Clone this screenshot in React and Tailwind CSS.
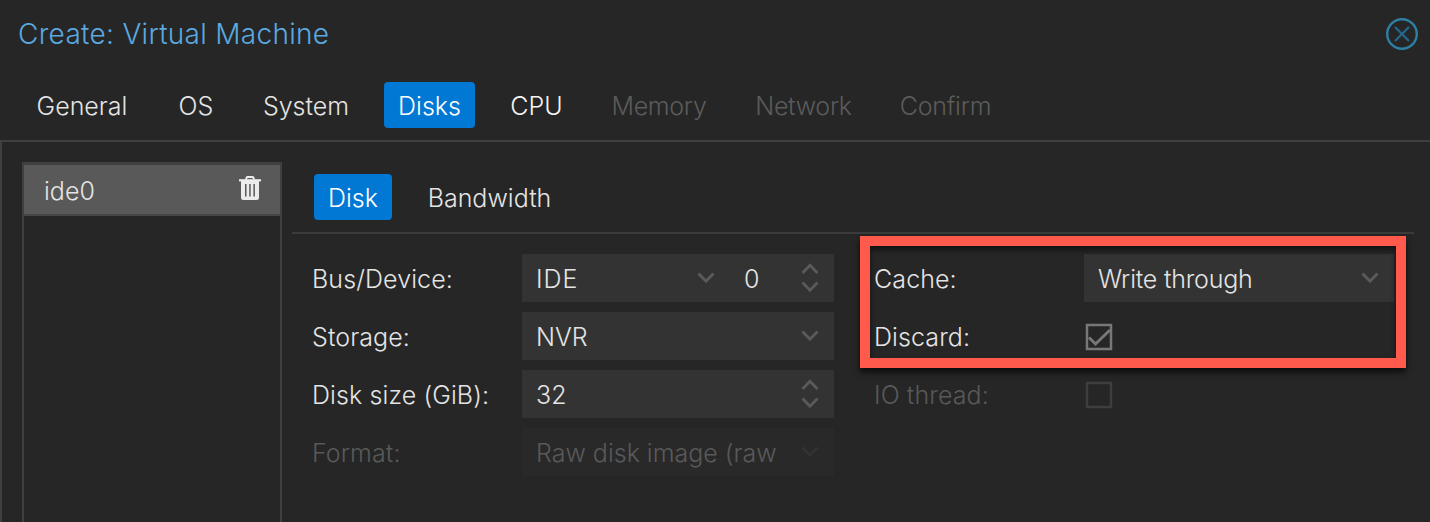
import React from "react";

function Chevron({ up = false, className = "text-[#5a5a5a]" }) {
  return (
    <svg width="18" height="12" viewBox="0 0 18 12" fill="none" stroke="currentColor" strokeWidth="2.9" className={className}>
      <path d={up ? "M1.500 10 9 2.300 16.500 10" : "M1.500 1.500 9 9.200 16.500 1.500"} />
    </svg>
  );
}

function Spinner() {
  return (
    <span className="flex flex-col gap-[6px]">
      <Chevron up />
      <Chevron />
    </span>
  );
}

function Trash() {
  return (
    <svg width="24" height="26" viewBox="0 0 24 26" className="mb-[3px] text-[#ececec]">
      <path fill="none" stroke="currentColor" strokeWidth="2" d="M8 4.5 8.6 2.6Q8.9 2 9.6 2H14.4Q15.1 2 15.4 2.6L16 4.5" />
      <path fill="currentColor" d="M1 4.200H23V6.400H1Z" />
      <path fill="currentColor" fillRule="evenodd" d="M3 6H21V22.500Q21 25 18.500 25H5.500Q3 25 3 22.500ZM7 9V21.500H8.500V9ZM11.200 9V21.500H12.700V9ZM15.400 9V21.500H16.900V9Z" />
    </svg>
  );
}

const tabs = [
  { name: "General", box: "w-[120px]", tone: "text-[#e4e4e4]" },
  { name: "OS", box: "w-[64px]", tone: "text-[#e4e4e4]" },
  { name: "System", box: "w-[112px]", tone: "text-[#e4e4e4]" },
  { name: "Disks", box: "w-[91px]", tone: "bg-[#0078d4] text-white" },
  { name: "CPU", box: "w-[79px]", tone: "text-[#f4f4f4]" },
  { name: "Memory", box: "w-[122px]", tone: "text-[#5b5b5b] tracking-[-0.3px]" },
  { name: "Network", box: "w-[123px]", tone: "text-[#5b5b5b] tracking-[-0.3px]" },
  { name: "Confirm", box: "w-[117px]", tone: "text-[#5b5b5b] tracking-[-0.25px]" },
];

function Tab({ name, box, tone }) {
  return (
    <button className={`flex h-[46px] items-center justify-center rounded-[4px] pt-[2px] whitespace-nowrap ${box} ${tone}`}>
      {name}
    </button>
  );
}

function Row({ label, disabled, children }) {
  return (
    <div className={`flex h-12 items-center ${disabled ? "text-[#595959]" : "text-[#e4e4e4]"}`}>
      <label className="w-[210px] shrink-0 pt-[2px] tracking-[0.1px] whitespace-nowrap">{label}</label>
      {children}
    </div>
  );
}

function Field({ value, disabled, spinner, className = "w-[312px]" }) {
  return (
    <div className={`flex h-12 items-center justify-between pr-[15px] pl-[14px] ${className} ${disabled ? "bg-[#292929]" : "bg-[#333333]"}`}>
      <span className="pt-[2px] whitespace-nowrap">{value}</span>
      {spinner ? <Spinner /> : <Chevron className={disabled ? "text-[#333333]" : "text-[#5a5a5a]"} />}
    </div>
  );
}

export default function App() {
  return (
    <main className="flex h-[522px] w-[1430px] flex-col overflow-hidden bg-[#262626] font-['Inter','Liberation_Sans',sans-serif] text-[25px] leading-[30px] font-light">
      <header className="flex h-[68px] shrink-0 items-center justify-between pr-3 pl-[18px] text-[#5aa9e0]">
        <h1 className="pb-[1px] text-[28px] font-light tracking-[0.3px]">Create: Virtual Machine</h1>
        <svg width="32" height="32" viewBox="0 0 32 32" fill="none" className="text-[#2e7fa3]">
          <circle cx="16" cy="16" r="14.8" stroke="currentColor" strokeWidth="2.4" />
          <path d="M9 9 23 23M23 9 9 23" stroke="#22678c" strokeWidth="2.3" />
        </svg>
      </header>
      <nav className="flex h-[72px] shrink-0 gap-[22px] pt-[14px] pl-[22px]">
        {tabs.map((t) => <Tab key={t.name} {...t} />)}
      </nav>
      <div className="flex min-h-0 flex-1 border-t-2 border-l-2 border-[#404040] pt-5 pl-5">
        <aside className="w-[260px] shrink-0 border-x-2 border-t-[3px] border-[#404040]">
          <div className="flex h-[51px] items-center justify-between border-b-2 border-[#464646] bg-[#595959] pr-[18px] pl-5 text-[#e4e4e4]">
            <span className="pt-[2px]">ide0</span>
            <Trash />
          </div>
        </aside>
        <section className="ml-[10px] w-[1122px] pt-3">
          <nav className="flex h-[60px] gap-[22px] border-b-2 border-[#3b3b3b] pl-[22px]">
            <Tab name="Disk" box="w-[78px]" tone="bg-[#0078d4] text-white" />
            <Tab name="Bandwidth" box="w-[151px]" tone="text-[#e4e4e4]" />
          </nav>
          <div className="flex pt-5 pl-5">
            <div className="flex w-[562px] flex-col gap-[10px]">
              <Row label="Bus/Device:">
                <Field value="IDE" className="w-[208px] tracking-[1px]" />
                <Field value="0" spinner className="w-[104px]" />
              </Row>
              <Row label="Storage:"><Field value="NVR" /></Row>
              <Row label="Disk size (GiB):"><Field value="32" spinner /></Row>
              <Row label="Format:" disabled><Field value="Raw disk image (raw" disabled /></Row>
            </div>
            <div className="relative flex flex-col gap-[10px]">
              <Row label="Cache:"><Field value="Write through" className="w-[310px] tracking-[-0.2px]" /></Row>
              <Row label="Discard:">
                <svg width="30" height="28" viewBox="0 0 30 28" fill="none" stroke="#777777" strokeWidth="2.5" className="mt-[2px]">
                  <path d="M3 2H27V26H3Z" />
                  <path strokeWidth="3" d="M5 14.500 11.500 21 26 7" />
                </svg>
              </Row>
              <Row label="IO thread:" disabled>
                <svg width="30" height="28" viewBox="0 0 30 28" fill="none" stroke="#3e3e3e" strokeWidth="2.5" className="mt-[2px]">
                  <path d="M3 2H27V26H3Z" />
                </svg>
              </Row>
              <div className="pointer-events-none absolute -top-[18px] -left-[14px] h-[132px] w-[546px] border-10 border-[#ff5a4b] shadow-[0_4px_6px_#0b0b0b,inset_0_4px_5px_#141414]" />
            </div>
          </div>
        </section>
      </div>
    </main>
  );
}
